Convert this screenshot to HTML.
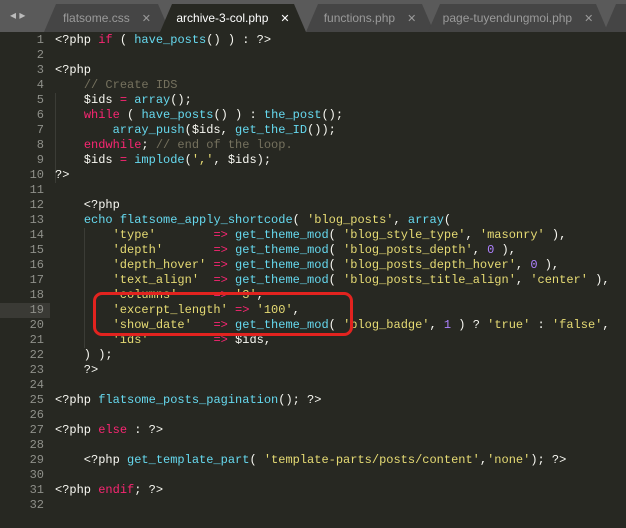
<!DOCTYPE html>
<html><head><meta charset="utf-8"><style>
html,body{margin:0;padding:0;width:626px;height:522px;overflow:hidden;background:#272822}
.tabs{position:absolute;left:0;top:0;width:626px;height:32px;background:#5a5a5a}
.tab{position:absolute;top:4px;height:28px;background:#454545;font:12px "Liberation Sans",sans-serif;color:#9a9a9a;line-height:28px;text-align:center;clip-path:polygon(0 100%,12px 0,calc(100% - 12px) 0,100% 100%)}
.tab.a{background:#272822;color:#fff}
.x{margin-left:12px;font-size:11px}
.code{position:absolute;left:0;top:33px;width:626px;font:12px/15px "Liberation Mono",monospace;color:#f8f8f2;white-space:pre}
.ln{position:absolute;left:0;width:44px;text-align:right;color:#8f908a;padding-right:0}
.t{position:absolute;left:55px}
.k{color:#f92672}.f{color:#66d9ef}.s{color:#e6db74}.n{color:#ae81ff}.c{color:#75715e}.e{color:#66d9ef}
.hl{position:absolute;left:0;top:303px;width:50px;height:15px;background:#3a3a35}
.g{position:absolute;width:1px;background:#3b3c36}
.box{position:absolute;left:93px;top:292px;width:254px;height:38px;border:3px solid #e2231f;border-radius:9px}
</style></head><body>
<div class="tabs">
<div style="position:absolute;left:10px;top:8px;color:#bbb;font:12px sans-serif">◂ ▸</div>
<div class="tab" style="left:44px;width:126px">flatsome.css<span class="x">✕</span></div>
<div class="tab a" style="left:160px;width:146px">archive-3-col.php<span class="x">✕</span></div>
<div class="tab" style="left:306px;width:128px">functions.php<span class="x">✕</span></div>
<div class="tab" style="left:428px;width:180px">page-tuyendungmoi.php<span class="x">✕</span></div>
<div class="tab" style="left:604px;width:60px"></div>
</div>
<div class="hl"></div>
<div class="g" style="left:55px;top:93px;height:90px"></div>
<div class="g" style="left:84px;top:228px;height:120px"></div>
<div class="code">
<div class="ln" style="top:0">1</div><div class="t" style="top:0">&lt;?php <span class="k">if</span> ( <span class="f">have_posts</span>() ) : ?&gt;</div>
<div class="ln" style="top:15px">2</div>
<div class="ln" style="top:30px">3</div><div class="t" style="top:30px">&lt;?php</div>
<div class="ln" style="top:45px">4</div><div class="t" style="top:45px">    <span class="c">// Create IDS</span></div>
<div class="ln" style="top:60px">5</div><div class="t" style="top:60px">    $ids <span class="k">=</span> <span class="f">array</span>();</div>
<div class="ln" style="top:75px">6</div><div class="t" style="top:75px">    <span class="k">while</span> ( <span class="f">have_posts</span>() ) : <span class="f">the_post</span>();</div>
<div class="ln" style="top:90px">7</div><div class="t" style="top:90px">        <span class="f">array_push</span>($ids, <span class="f">get_the_ID</span>());</div>
<div class="ln" style="top:105px">8</div><div class="t" style="top:105px">    <span class="k">endwhile</span>; <span class="c">// end of the loop.</span></div>
<div class="ln" style="top:120px">9</div><div class="t" style="top:120px">    $ids <span class="k">=</span> <span class="f">implode</span>(<span class="s">','</span>, $ids);</div>
<div class="ln" style="top:135px">10</div><div class="t" style="top:135px">?&gt;</div>
<div class="ln" style="top:150px">11</div>
<div class="ln" style="top:165px">12</div><div class="t" style="top:165px">    &lt;?php</div>
<div class="ln" style="top:180px">13</div><div class="t" style="top:180px">    <span class="e">echo</span> <span class="f">flatsome_apply_shortcode</span>( <span class="s">'blog_posts'</span>, <span class="f">array</span>(</div>
<div class="ln" style="top:195px">14</div><div class="t" style="top:195px">        <span class="s">'type'</span>        <span class="k">=&gt;</span> <span class="f">get_theme_mod</span>( <span class="s">'blog_style_type'</span>, <span class="s">'masonry'</span> ),</div>
<div class="ln" style="top:210px">15</div><div class="t" style="top:210px">        <span class="s">'depth'</span>       <span class="k">=&gt;</span> <span class="f">get_theme_mod</span>( <span class="s">'blog_posts_depth'</span>, <span class="n">0</span> ),</div>
<div class="ln" style="top:225px">16</div><div class="t" style="top:225px">        <span class="s">'depth_hover'</span> <span class="k">=&gt;</span> <span class="f">get_theme_mod</span>( <span class="s">'blog_posts_depth_hover'</span>, <span class="n">0</span> ),</div>
<div class="ln" style="top:240px">17</div><div class="t" style="top:240px">        <span class="s">'text_align'</span>  <span class="k">=&gt;</span> <span class="f">get_theme_mod</span>( <span class="s">'blog_posts_title_align'</span>, <span class="s">'center'</span> ),</div>
<div class="ln" style="top:255px">18</div><div class="t" style="top:255px">        <span class="s">'columns'</span>     <span class="k">=&gt;</span> <span class="s">'3'</span>,</div>
<div class="ln" style="top:270px">19</div><div class="t" style="top:270px">        <span class="s">'excerpt_length'</span> <span class="k">=&gt;</span> <span class="s">'100'</span>,</div>
<div class="ln" style="top:285px">20</div><div class="t" style="top:285px">        <span class="s">'show_date'</span>   <span class="k">=&gt;</span> <span class="f">get_theme_mod</span>( <span class="s">'blog_badge'</span>, <span class="n">1</span> ) ? <span class="s">'true'</span> : <span class="s">'false'</span>,</div>
<div class="ln" style="top:300px">21</div><div class="t" style="top:300px">        <span class="s">'ids'</span>         <span class="k">=&gt;</span> $ids,</div>
<div class="ln" style="top:315px">22</div><div class="t" style="top:315px">    ) );</div>
<div class="ln" style="top:330px">23</div><div class="t" style="top:330px">    ?&gt;</div>
<div class="ln" style="top:345px">24</div>
<div class="ln" style="top:360px">25</div><div class="t" style="top:360px">&lt;?php <span class="f">flatsome_posts_pagination</span>(); ?&gt;</div>
<div class="ln" style="top:375px">26</div>
<div class="ln" style="top:390px">27</div><div class="t" style="top:390px">&lt;?php <span class="k">else</span> : ?&gt;</div>
<div class="ln" style="top:405px">28</div>
<div class="ln" style="top:420px">29</div><div class="t" style="top:420px">    &lt;?php <span class="f">get_template_part</span>( <span class="s">'template-parts/posts/content'</span>,<span class="s">'none'</span>); ?&gt;</div>
<div class="ln" style="top:435px">30</div>
<div class="ln" style="top:450px">31</div><div class="t" style="top:450px">&lt;?php <span class="k">endif</span>; ?&gt;</div>
<div class="ln" style="top:465px">32</div>
</div>
<div class="box"></div>
</body></html>
